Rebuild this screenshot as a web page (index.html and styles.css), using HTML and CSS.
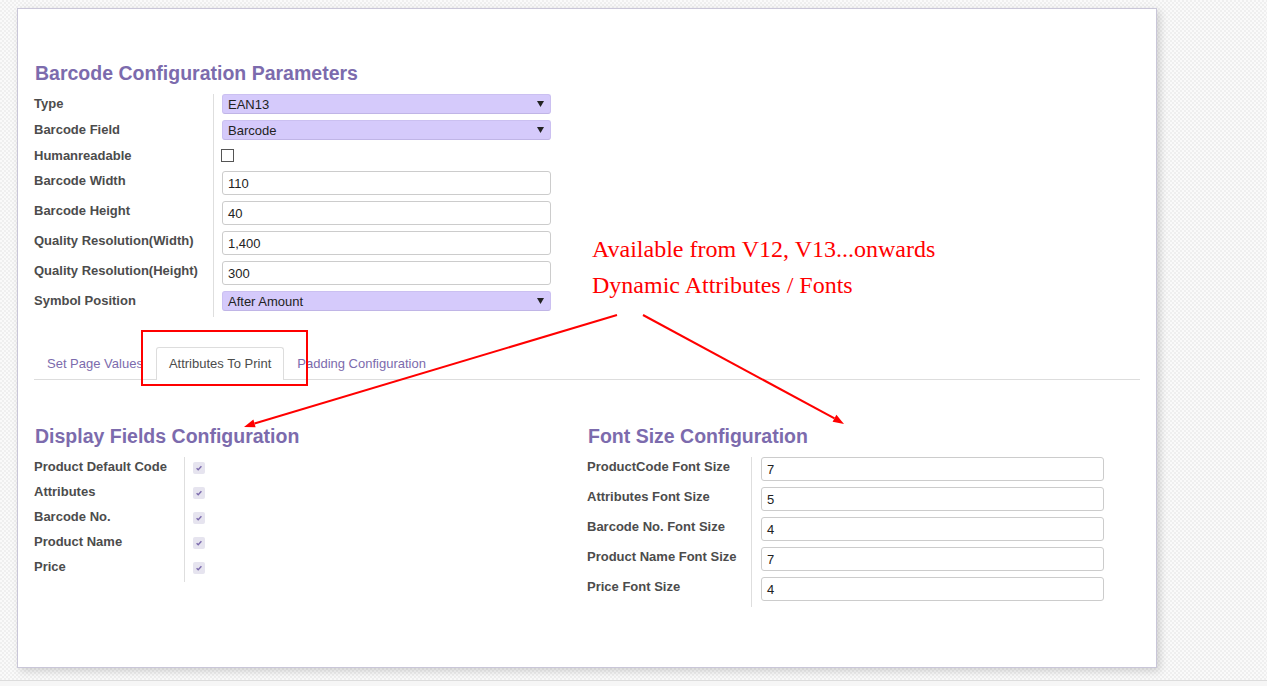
FILE: index.html
```html
<!DOCTYPE html>
<html>
<head>
<meta charset="utf-8">
<title>Barcode Configuration</title>
<link rel="stylesheet" href="styles.css">
</head>
<body>
<div class="page">
  <div class="sheet">
    <h1 class="title">Barcode Configuration Parameters</h1>
    <div class="group top-group">
      <div class="row h26"><div class="lbl">Type</div><div class="val"><div class="select"><span>EAN13</span><svg class="caret" width="7" height="6" viewBox="0 0 7 6"><polygon points="0,0 7,0 3.5,6" fill="#222"/></svg></div></div></div>
      <div class="row h26"><div class="lbl">Barcode Field</div><div class="val"><div class="select"><span>Barcode</span><svg class="caret" width="7" height="6" viewBox="0 0 7 6"><polygon points="0,0 7,0 3.5,6" fill="#222"/></svg></div></div></div>
      <div class="row h25"><div class="lbl">Humanreadable</div><div class="val"><span class="checkbox"></span></div></div>
      <div class="row h30"><div class="lbl">Barcode Width</div><div class="val"><div class="input">110</div></div></div>
      <div class="row h30"><div class="lbl">Barcode Height</div><div class="val"><div class="input">40</div></div></div>
      <div class="row h30"><div class="lbl">Quality Resolution(Width)</div><div class="val"><div class="input">1,400</div></div></div>
      <div class="row h30"><div class="lbl">Quality Resolution(Height)</div><div class="val"><div class="input">300</div></div></div>
      <div class="row h26"><div class="lbl">Symbol Position</div><div class="val"><div class="select"><span>After Amount</span><svg class="caret" width="7" height="6" viewBox="0 0 7 6"><polygon points="0,0 7,0 3.5,6" fill="#222"/></svg></div></div></div>
    </div>

    <div class="notebook">
      <div class="tabs">
        <div class="tab">Set Page Values</div>
        <div class="tab active">Attributes To Print</div>
        <div class="tab">Padding Configuration</div>
      </div>
      <div class="pane">
        <div class="col">
          <h2 class="title">Display Fields Configuration</h2>
          <div class="group left-group">
            <div class="row h25"><div class="lbl">Product Default Code</div><div class="val"><svg class="dcheck" width="12" height="12" viewBox="0 0 12 12"><rect width="12" height="12" rx="2" fill="#e6e4ef"/><path d="M3.6 6.3 L5.2 7.8 L8.4 4.3" fill="none" stroke="#7c6bad" stroke-width="1.4"/></svg></div></div>
            <div class="row h25"><div class="lbl">Attributes</div><div class="val"><svg class="dcheck" width="12" height="12" viewBox="0 0 12 12"><rect width="12" height="12" rx="2" fill="#e6e4ef"/><path d="M3.6 6.3 L5.2 7.8 L8.4 4.3" fill="none" stroke="#7c6bad" stroke-width="1.4"/></svg></div></div>
            <div class="row h25"><div class="lbl">Barcode No.</div><div class="val"><svg class="dcheck" width="12" height="12" viewBox="0 0 12 12"><rect width="12" height="12" rx="2" fill="#e6e4ef"/><path d="M3.6 6.3 L5.2 7.8 L8.4 4.3" fill="none" stroke="#7c6bad" stroke-width="1.4"/></svg></div></div>
            <div class="row h25"><div class="lbl">Product Name</div><div class="val"><svg class="dcheck" width="12" height="12" viewBox="0 0 12 12"><rect width="12" height="12" rx="2" fill="#e6e4ef"/><path d="M3.6 6.3 L5.2 7.8 L8.4 4.3" fill="none" stroke="#7c6bad" stroke-width="1.4"/></svg></div></div>
            <div class="row h25"><div class="lbl">Price</div><div class="val"><svg class="dcheck" width="12" height="12" viewBox="0 0 12 12"><rect width="12" height="12" rx="2" fill="#e6e4ef"/><path d="M3.6 6.3 L5.2 7.8 L8.4 4.3" fill="none" stroke="#7c6bad" stroke-width="1.4"/></svg></div></div>
          </div>
        </div>
        <div class="col">
          <h2 class="title">Font Size Configuration</h2>
          <div class="group right-group">
            <div class="row h30"><div class="lbl">ProductCode Font Size</div><div class="val"><div class="input">7</div></div></div>
            <div class="row h30"><div class="lbl">Attributes Font Size</div><div class="val"><div class="input">5</div></div></div>
            <div class="row h30"><div class="lbl">Barcode No. Font Size</div><div class="val"><div class="input">4</div></div></div>
            <div class="row h30"><div class="lbl">Product Name Font Size</div><div class="val"><div class="input">7</div></div></div>
            <div class="row h30"><div class="lbl">Price Font Size</div><div class="val"><div class="input">4</div></div></div>
          </div>
        </div>
      </div>
    </div>
  </div>

  <svg class="annot" width="1267" height="686" viewBox="0 0 1267 686">
    <rect x="142" y="331" width="165" height="54" fill="none" stroke="#ff0000" stroke-width="2"/>
    <line x1="617" y1="315" x2="254.5" y2="423.5" stroke="#ff0000" stroke-width="2"/>
    <polygon points="244,427 253.4,419.6 255.6,427.3" fill="#ff0000"/>
    <line x1="643" y1="315" x2="834.5" y2="418.4" stroke="#ff0000" stroke-width="2"/>
    <polygon points="844,424 832.6,421.8 836.4,414.8" fill="#ff0000"/>
  </svg>
  <div class="note">Available from V12, V13...onwards<br>Dynamic Attributes / Fonts</div>
</div>
<div class="footer"></div>
</body>
</html>
```

FILE: styles.css
```css
* { box-sizing: border-box; }

html, body {
  margin: 0;
  padding: 0;
}

body {
  font-family: "Liberation Sans", Arial, sans-serif;
  font-size: 13px;
  color: #4c4c4c;
  background: #f5f5f5;
  width: 1267px;
  height: 686px;
  overflow: hidden;
}

.page {
  position: relative;
  height: 680px;
  padding-top: 8px;
  padding-left: 17px;
  background-color: #f4f4f4;
  background-image: repeating-conic-gradient(#efefef 0 25%, #fafafa 0 50%);
  background-size: 4px 4px;
}

.footer {
  height: 6px;
  border-top: 1px solid #dcdcdc;
  background: #f6f6f6;
}

.sheet {
  width: 1140px;
  height: 660px;
  background: #fff;
  border: 1px solid #c9c6d8;
  box-shadow: 3px 3px 8px rgba(0, 0, 0, 0.16);
  padding: 51px 16px 0 16px;
}

.title {
  margin: 0 0 8px 1px;
  font-size: 19.5px;
  line-height: 26px;
  font-weight: bold;
  color: #7c6bad;
}

.group {
  display: flex;
  flex-direction: column;
}

.row {
  display: flex;
}

.h25 { height: 25px; }
.h26 { height: 26px; }
.h30 { height: 30px; }

.lbl {
  font-weight: bold;
  line-height: 20px;
  color: #4c4c4c;
  border-right: 1px solid #dedede;
  white-space: nowrap;
}

.top-group .lbl { width: 180px; }
.top-group .val { padding-left: 8px; }

.left-group .lbl { width: 151px; }
.left-group .val { padding-left: 8px; }

.right-group .lbl { width: 165px; }
.right-group .val { padding-left: 9px; }

.select {
  width: 329px;
  height: 20px;
  background: #d5cafb;
  border: 1px solid #cbc0f1;
  border-bottom-color: #c0b5e6;
  border-radius: 3px;
  display: flex;
  align-items: center;
  justify-content: space-between;
  padding: 0 6px 0 5px;
  color: #222;
  font-size: 13px;
}

.caret { display: block; }

.input {
  width: 329px;
  height: 24px;
  border: 1px solid #cccccc;
  border-radius: 3px;
  padding: 1px 5px 0 5px;
  line-height: 22px;
  color: #222;
  font-size: 13px;
  background: #fff;
}

.right-group .input {
  width: 343px;
}

.checkbox {
  display: block;
  width: 13px;
  height: 13px;
  margin-top: 3px;
  margin-left: -1px;
  border: 1px solid #555;
  background: #fff;
}

.dcheck {
  display: block;
  margin-top: 5px;
}

.notebook {
  margin-top: 30px;
}

.tabs {
  display: flex;
  border-bottom: 1px solid #dddddd;
}

.tab {
  padding: 7px 12px 7px 12px;
  line-height: 18px;
  font-size: 13px;
  color: #7c6bad;
  border: 1px solid transparent;
  border-bottom: 0;
  margin-bottom: -1px;
  border-radius: 3px 3px 0 0;
  white-space: nowrap;
}

.tab.active {
  color: #4c4c4c;
  background: #fff;
  border-color: #dddddd;
}

.pane {
  padding-top: 43px;
  display: grid;
  grid-template-columns: 1fr 1fr;
}

.pane .title {
  margin-bottom: 8px;
}

.annot {
  position: absolute;
  left: 0;
  top: 0;
  pointer-events: none;
}

.note {
  position: absolute;
  left: 592px;
  top: 231px;
  font-family: "Liberation Serif", "Times New Roman", serif;
  font-size: 24px;
  line-height: 36px;
  color: #ff0000;
  white-space: nowrap;
}
```
